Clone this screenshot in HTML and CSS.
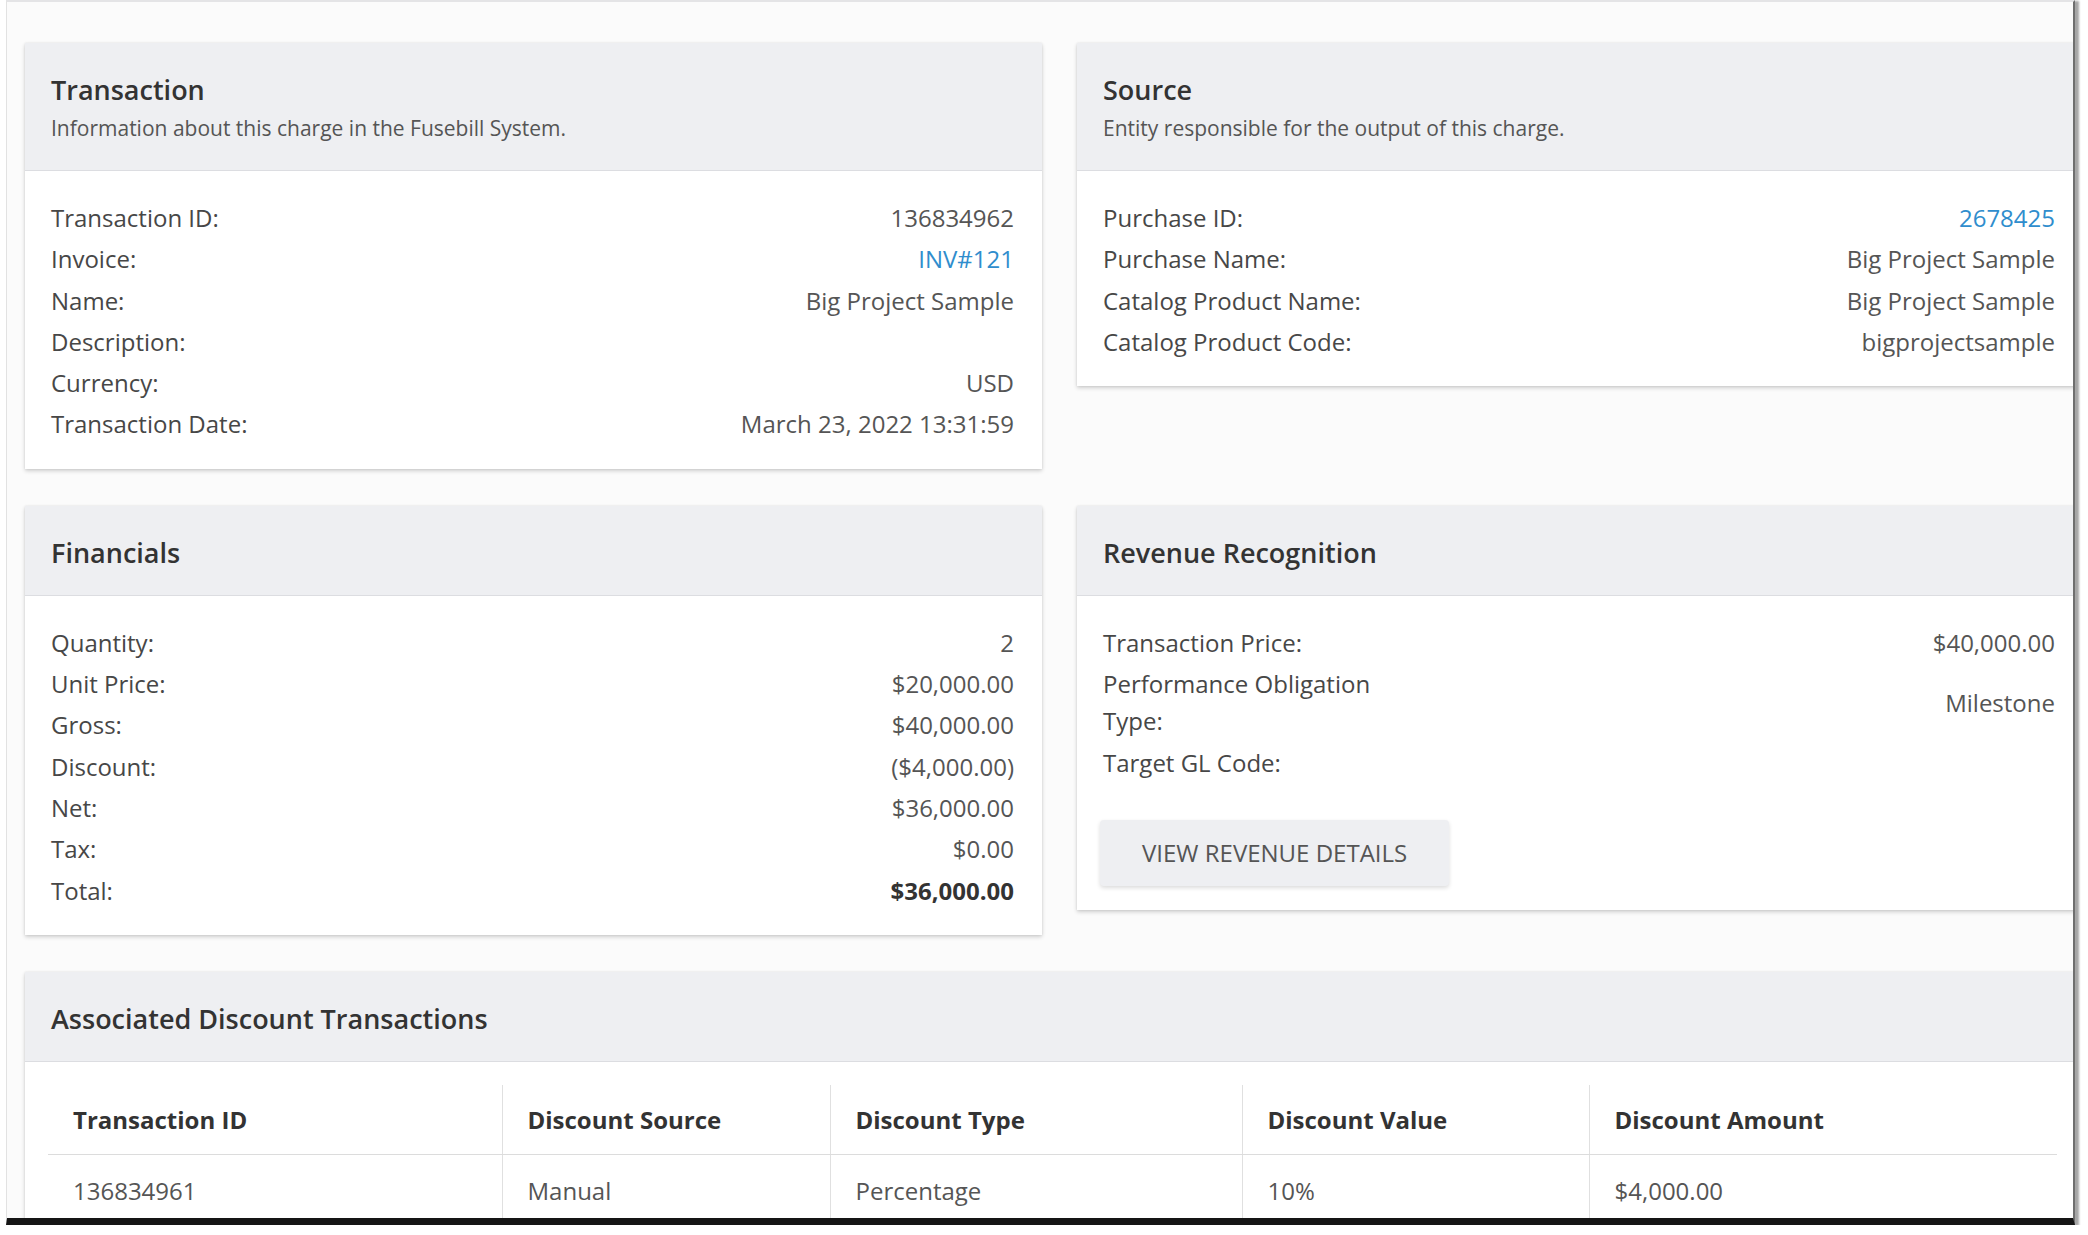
FILE: index.html
```html
<!DOCTYPE html>
<html lang="en">
<head>
  <meta charset="UTF-8" />
  <title>Charge Details</title>
  <link rel="stylesheet" href="styles.css">
</head>
<body>

  <div class="frame">
    <div class="grid">

      <!-- Transaction -->
      <div class="card">
        <div class="card-head">
          <h2>Transaction</h2>
          <p class="sub">Information about this charge in the Fusebill System.</p>
        </div>
        <div class="card-body">
          <div class="row"><span class="label">Transaction ID:</span><span class="value">136834962</span></div>
          <div class="row"><span class="label">Invoice:</span><span class="value"><a href="#">INV#121</a></span></div>
          <div class="row"><span class="label">Name:</span><span class="value">Big Project Sample</span></div>
          <div class="row"><span class="label">Description:</span><span class="value"></span></div>
          <div class="row"><span class="label">Currency:</span><span class="value">USD</span></div>
          <div class="row"><span class="label">Transaction Date:</span><span class="value">March 23, 2022 13:31:59</span></div>
        </div>
      </div>

      <!-- Source -->
      <div class="card">
        <div class="card-head">
          <h2>Source</h2>
          <p class="sub">Entity responsible for the output of this charge.</p>
        </div>
        <div class="card-body">
          <div class="row"><span class="label">Purchase ID:</span><span class="value"><a href="#">2678425</a></span></div>
          <div class="row"><span class="label">Purchase Name:</span><span class="value">Big Project Sample</span></div>
          <div class="row"><span class="label">Catalog Product Name:</span><span class="value">Big Project Sample</span></div>
          <div class="row"><span class="label">Catalog Product Code:</span><span class="value">bigprojectsample</span></div>
        </div>
      </div>

      <!-- Financials -->
      <div class="card">
        <div class="card-head">
          <h2>Financials</h2>
        </div>
        <div class="card-body">
          <div class="row"><span class="label">Quantity:</span><span class="value">2</span></div>
          <div class="row"><span class="label">Unit Price:</span><span class="value">$20,000.00</span></div>
          <div class="row"><span class="label">Gross:</span><span class="value">$40,000.00</span></div>
          <div class="row"><span class="label">Discount:</span><span class="value">($4,000.00)</span></div>
          <div class="row"><span class="label">Net:</span><span class="value">$36,000.00</span></div>
          <div class="row"><span class="label">Tax:</span><span class="value">$0.00</span></div>
          <div class="row"><span class="label">Total:</span><span class="value strong">$36,000.00</span></div>
        </div>
      </div>

      <!-- Revenue Recognition -->
      <div class="card">
        <div class="card-head">
          <h2>Revenue Recognition</h2>
        </div>
        <div class="card-body">
          <div class="row"><span class="label">Transaction Price:</span><span class="value">$40,000.00</span></div>
          <div class="row"><span class="label">Performance Obligation Type:</span><span class="value">Milestone</span></div>
          <div class="row"><span class="label">Target GL Code:</span><span class="value"></span></div>
          <button class="btn">View Revenue Details</button>
        </div>
      </div>

      <!-- Associated Discount Transactions -->
      <div class="card wide">
        <div class="card-head">
          <h2>Associated Discount Transactions</h2>
        </div>
        <div class="card-body table-body">
          <table>
            <colgroup>
              <col class="c1"><col class="c2"><col class="c3"><col class="c4"><col class="c5">
            </colgroup>
            <thead>
              <tr>
                <th>Transaction ID</th>
                <th>Discount Source</th>
                <th>Discount Type</th>
                <th>Discount Value</th>
                <th>Discount Amount</th>
              </tr>
            </thead>
            <tbody>
              <tr>
                <td>136834961</td>
                <td>Manual</td>
                <td>Percentage</td>
                <td>10%</td>
                <td>$4,000.00</td>
              </tr>
            </tbody>
          </table>
        </div>
      </div>

    </div>
  </div>

</body>
</html>
```

FILE: styles.css
```css
body {
  margin: 0;
  background: #ffffff;
  font-family: "Open Sans", "Noto Sans", sans-serif;
  color: #444;
}

/* the captured window */
.frame {
  box-sizing: border-box;
  width: 2069px;
  height: 1225px;
  margin-left: 6px;
  padding: 41px 0 0 18px;
  background: #fbfbfb;
  border-top: 2px solid #e4e4e6;
  border-left: 1px solid #e2e2e2;
  border-right: 2px solid #6f6f6f;
  border-bottom: 7px solid #151515;
  overflow: hidden;
  box-shadow: 4px 1px 2px rgba(0,0,0,0.35);
}

.grid {
  display: grid;
  grid-template-columns: 1017px 1006px;
  column-gap: 35px;
  row-gap: 37px;
  align-items: start;
}

.card {
  background: #fff;
  box-shadow: 0 2px 4px rgba(0,0,0,0.18), 0 0 2px rgba(0,0,0,0.08);
}
.card.wide {
  grid-column: 1 / span 2;
}

.card-head {
  background: #eeeff2;
  border-bottom: 1px solid #dcdde1;
  padding: 29px 26px 24px 26px;
}
.card-head h2 {
  margin: 0;
  font-size: 27px;
  line-height: 36px;
  font-weight: 600;
  color: #333;
}
.card-head .sub {
  margin: 6px 0 4px 0;
  font-size: 21px;
  line-height: 28px;
  color: #555;
}

.card-body {
  padding: 26px 28px 24px 26px;
}

.row {
  display: grid;
  grid-template-columns: 307px 1fr;
  column-gap: 30px;
  align-items: center;
  padding: 2px 0;
  font-size: 24px;
  line-height: 37.3px;
}
.label {
  color: #474747;
}
.value {
  text-align: right;
  color: #555;
}
.value.strong {
  font-weight: 700;
  color: #333;
}
a {
  color: #2f8dcd;
  text-decoration: none;
}

.btn {
  margin-top: 37px;
  margin-left: -3px;
  height: 66px;
  padding: 0 42px;
  border: none;
  border-radius: 4px;
  background: #eeeff2;
  box-shadow: 0 2px 4px rgba(0,0,0,0.14);
  font-family: "Open Sans", "Noto Sans", sans-serif;
  font-size: 24px;
  text-transform: uppercase;
  color: #555;
  cursor: pointer;
}

.table-body {
  padding: 23px 26px 0 23px;
}
table {
  width: 2009px;
  border-collapse: collapse;
  table-layout: fixed;
  font-size: 24px;
}
col.c1 { width: 454px; }
col.c2 { width: 328px; }
col.c3 { width: 412px; }
col.c4 { width: 347px; }
col.c5 { width: 468px; }
th, td {
  text-align: left;
  padding: 0 25px;
}
th + th, td + td {
  border-left: 1px solid #e0e0e0;
}
th {
  height: 69px;
  font-weight: 700;
  color: #333;
  border-bottom: 1px solid #dcdcdc;
}
td {
  height: 72px;
  color: #555;
}
```
